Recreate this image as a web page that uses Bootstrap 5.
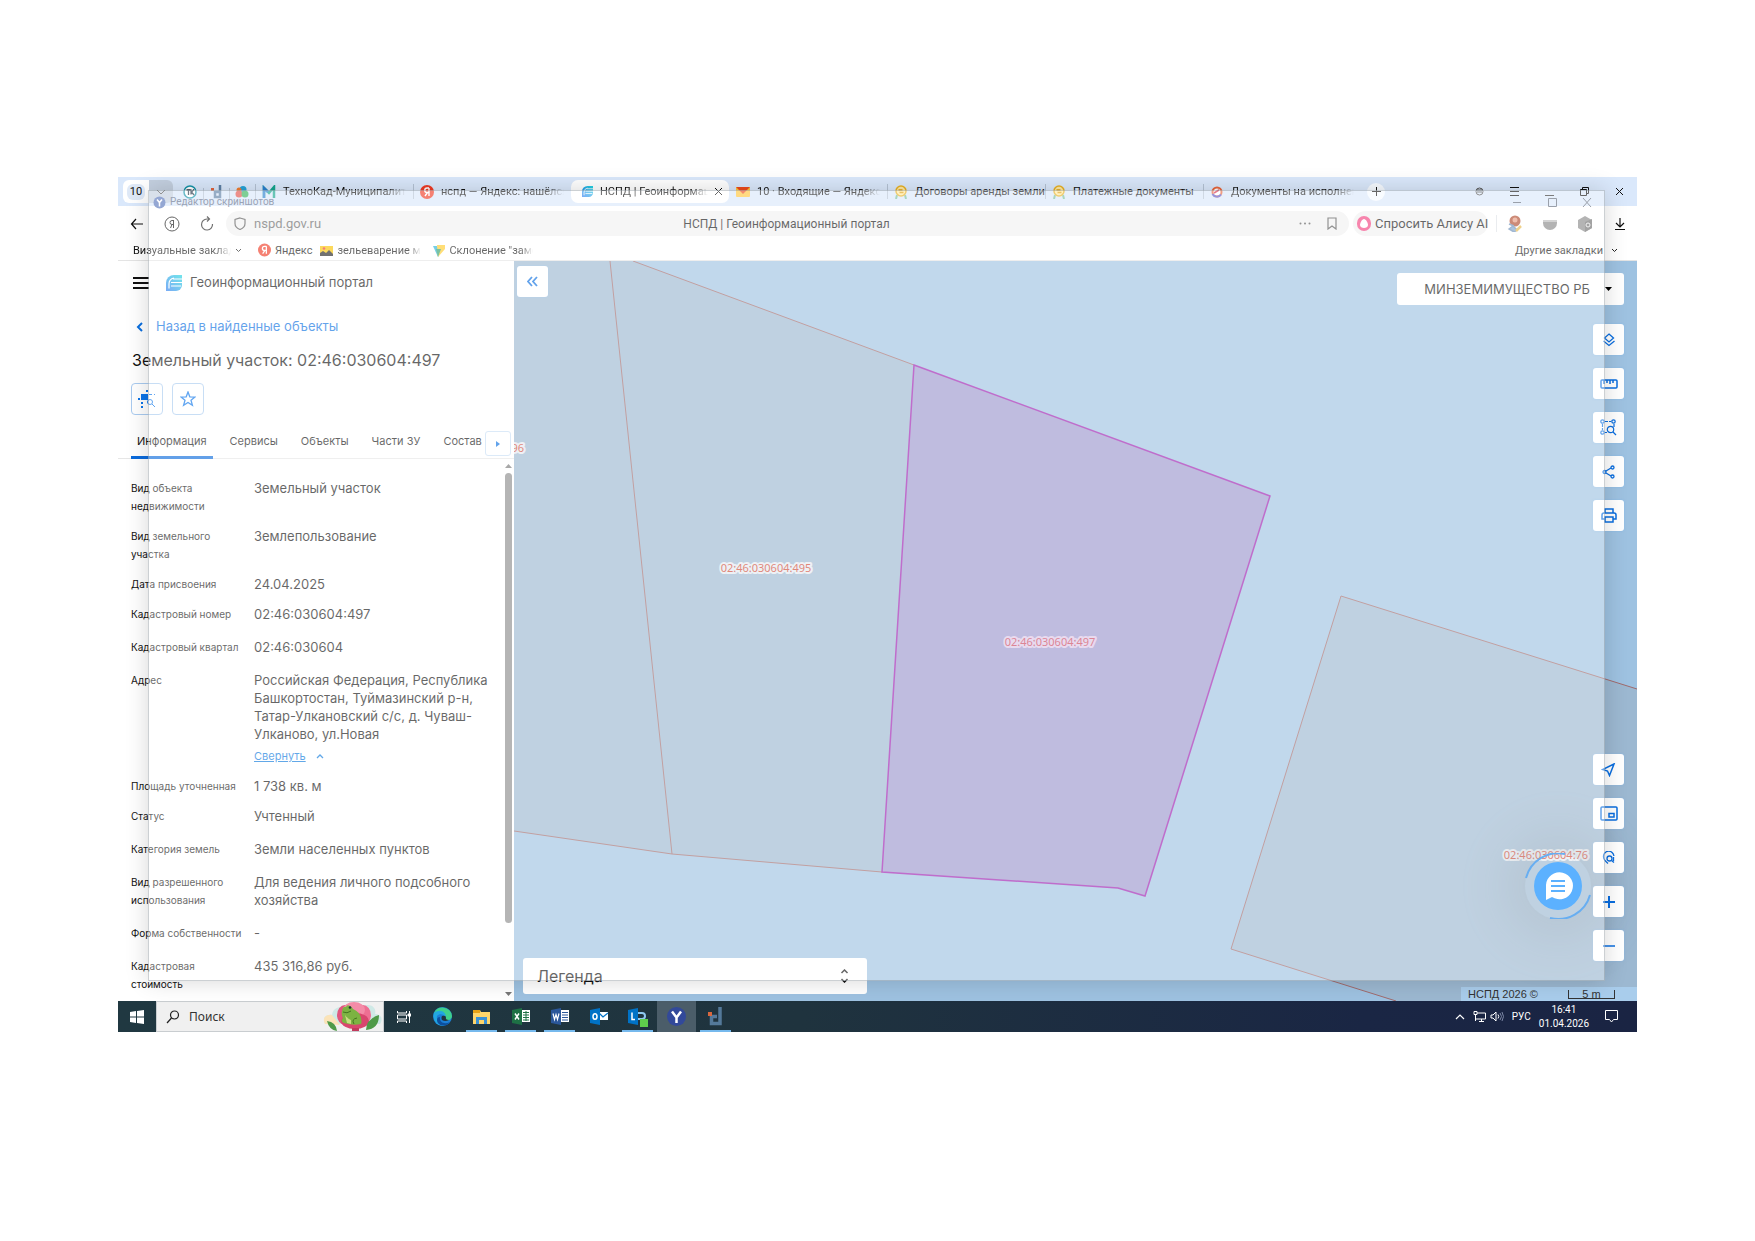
<!DOCTYPE html>
<html lang="ru">
<head>
<meta charset="utf-8">
<meta name="viewport" content="width=device-width, initial-scale=1">
<title>НСПД | Геоинформационный портал</title>
<link href="https://cdn.jsdelivr.net/npm/bootstrap@5.3.0/dist/css/bootstrap.min.css" rel="stylesheet">
<style>
body{background:#fff;font-family:Roboto,"Noto Sans",sans-serif;color:#111}
button{border:0;background:none;padding:0;color:inherit;font:inherit}
a{color:inherit;text-decoration:none}
svg{display:block;flex:none}
.stage{padding:177px 118px}
.desk{position:relative;background:#fff}
/* browser tabs */
.strip{height:29px;background:#dae8fb;padding-left:5px;font-size:11px;line-height:16px}
.count{width:26px;height:23px;background:#fff;border-radius:6px 0 0 6px}
.count span{background:#dfe9f7;border-radius:6px;padding:0 3px}
.drop{width:24px;height:23px;background:#c3cfdf;border-radius:0 6px 6px 0}
.pin{width:26px;height:16px}
.tabx{flex:0 0 158px;height:23px;padding:0 7px;gap:7px;min-width:0}
.sep{position:relative}
.sep::before{content:"";position:absolute;left:0;top:4px;height:15px;width:1px;background:#b4c2d4}
.cur{background:#fff;border-radius:7px}
.fadeout{overflow:hidden;white-space:nowrap;-webkit-mask-image:linear-gradient(90deg,#000 85%,transparent);mask-image:linear-gradient(90deg,#000 85%,transparent)}
.plus{width:18px;height:18px;border-radius:9px;background:#f6faff;margin-left:6px}
.wctl{width:35px}
/* address row */
.addr{height:35px;padding-left:9px;font-size:12px;background:#fff}
.nav-ic{width:20px;margin-right:15px}
.nav-ic.last{margin-right:9px}
.pill{background:#f1f1f1;border-radius:13px;height:25px}
.url{background:transparent;border:0;outline:0;color:#666;width:160px;font-size:13px;padding:0}
.ptitle{padding-right:92px}
.alice{width:135px;font-size:13px}
.ext{width:35px}
.marks{height:20px;padding:0 19px 0 15px;font-size:11px;line-height:16px;border-bottom:1px solid #e4e4e4}
.mk-a{width:98px}
.mk-b{width:84px}
/* side panel */
.work{min-height:740px}
.side{width:396px;flex:none;font-family:Inter,sans-serif;position:relative;background:#fff}
.side-head{height:43px;padding:0 15px;font-size:13px;gap:17px}
.back{height:45px;padding:0 16px;gap:10px;font-size:13px;color:#0a6fe0}
.side h1{font-size:16px;font-weight:400;line-height:22px;margin:0;padding:0 14px}
.sq{width:32px;height:32px;border:1px solid #a9cbf0;border-radius:4px;background:#fff;color:#0a74ea}
.acts{padding:12px 13px 0;gap:9px}
.ptabs{padding-left:13px;margin-top:14px;height:30px;border-bottom:1px solid #e6e6e6;font-size:11px}
.ptabs button{height:30px;padding:0 6px 2px;margin-right:11px;border-bottom:3px solid transparent;white-space:nowrap}
.ptabs button.on{border-color:#0b6bdc}
.more{position:absolute;right:3px;top:170px;width:26px;height:25px;border:1px solid #c8def5;border-radius:3px;background:#fff;color:#0a6fe0}
.facts{margin:0;padding:20px 20px 8px 13px}
.facts>div{display:flex;margin-bottom:15px}
.facts>div.tight{margin-bottom:12px}
.facts dt{width:123px;flex:none;font-weight:400;font-size:10px;line-height:18px;padding-right:12px}
.facts dd{margin:0;font-size:13px;line-height:18px}
.fold{color:#0a78dc;font-size:11px;line-height:18px;gap:10px}
.fold span{text-decoration:underline}
.sbar{position:absolute;right:2px;top:203px;bottom:5px;width:8px}
.thumb{width:7px;background:#8b8b8b;border-radius:4px;flex:0 0 450px;margin-top:5px}
/* map */
.map{position:relative;flex:1;min-width:0;overflow:hidden;background:#9ec2e1}
.map>svg{position:absolute;left:0;top:0;width:100%;height:100%}
.tool{width:31px;height:31px;background:#fff;border-radius:3px;color:#0a6ee0;box-shadow:0 0 2px rgba(120,180,240,.7)}
.tools{gap:13px}
.collapse-b{position:absolute;left:3px;top:5px}
.mright{position:absolute;right:13px;top:12px;bottom:40px}
.who{width:227px;height:32px;border:0;border-radius:3px;background:#fff;font:13px Inter,sans-serif;color:#111;appearance:none;padding:0 34px 0 0;text-align:right;text-align-last:right}
.whobox{position:relative;margin-bottom:19px}
.whobox svg{position:absolute;right:12px;top:14px}
.chat{position:absolute;right:46px;bottom:82px;width:66px;height:66px;border-radius:50%;box-shadow:0 0 50px 24px rgba(90,100,110,.2)}
.legend{position:absolute;left:9px;bottom:7px;width:344px;height:36px;background:#fff;border-radius:3px;font:16px Inter,sans-serif;padding:0 18px 0 14px}
.attr{position:absolute;right:0;bottom:0;height:14px;width:176px;background:#a9cdec;color:#333;font:11px "Liberation Sans",sans-serif;padding:0 22px 0 7px}
.scale5{width:47px;height:9px;line-height:9px;border:1px solid #333;border-top:0;text-align:center}
/* translucent window fading over the desktop */
.ghost{position:absolute;left:30px;top:13px;right:32px;bottom:51px;background:rgba(255,255,255,.36);border:1px solid rgba(110,120,130,.35);box-shadow:0 0 22px rgba(0,0,0,.16);pointer-events:none;font-size:10px;line-height:22px;color:#9aa3b5;z-index:5}
.ghost .wbtns{margin-right:12px}
/* taskbar */
.task{height:31px;background:linear-gradient(90deg,#203841,#1f333e 45%,#1a2644 82%,#1a2443);color:#fff;font-size:10px}
.startb{width:38px}
.find{width:228px;background:#f0f0f0;border:1px solid #c9cdd0;padding-left:9px;gap:9px}
.find input{border:0;background:none;outline:0;width:120px;font:12px "Noto Sans",sans-serif;color:#333;padding:0}
.find input::placeholder{color:#333;opacity:1}
.app{width:39px}
.run{background:linear-gradient(#76b9ed,#76b9ed) center bottom/31px 2px no-repeat}
.live{background:#4b5d69}
.tray{padding-right:19px}
.clock{line-height:14px}
</style>
<script src="https://cdn.jsdelivr.net/npm/bootstrap@5.3.0/dist/js/bootstrap.bundle.min.js"></script>
</head>
<body>
<svg width="0" height="0" class="position-absolute"><defs>
<linearGradient id="lg" x1="0" y1="1" x2="1" y2="0"><stop offset="0" stop-color="#2f7cf0"/><stop offset="1" stop-color="#22d6e0"/></linearGradient>
<symbol id="nspd" viewBox="0 0 16 16"><path fill="url(#lg)" d="M0 16V8a8 8 0 0 1 8-8h8v10a6 6 0 0 1-6 6z"/><path d="M7 4h9M5 7.500h11M5 11h10M3 13.500V9q0-5 5-6" stroke="#fff" stroke-width="1.200" fill="none"/></symbol>
<symbol id="coin" viewBox="0 0 14 14"><path d="M3 10l-1 4M11 10l1 4" stroke="#7bbf9a" stroke-width="2"/><circle cx="7" cy="6" r="5" fill="#ffe9a0" stroke="#e8b023" stroke-width="1.500"/><path d="M4.500 5h4M5.500 7.500h4" stroke="#e0a010" stroke-width="1.300"/></symbol>
<symbol id="ya" viewBox="0 0 14 14"><circle cx="7" cy="7" r="7" fill="#ef3a24"/><path d="M9 3v8M9 3H7a2 2 0 0 0 0 4.500h2M7.500 7.500L5 11" stroke="#fff" stroke-width="1.400" fill="none"/></symbol>
</defs></svg>
<main class="stage">
<div class="desk">
 <header>
  <div class="strip d-flex align-items-center">
   <button class="count d-flex align-items-center justify-content-center" aria-label="Вкладки"><span>10</span></button>
   <button class="drop d-flex align-items-center justify-content-center" aria-label="Список"><svg width="10" height="6" fill="none" stroke="#555"><path d="M1 1l4 4 4-4"/></svg></button>
   <div class="d-flex ms-1">
    <span class="pin d-flex justify-content-center"><svg width="14" height="16" viewBox="0 0 14 16"><circle cx="7" cy="8" r="6" fill="#fff" stroke="#1593a8" stroke-width="1.500"/><path d="M3.500 6h4M5.500 6v5M8 5.500v5M11 5.500L8.500 8l2.500 3" stroke="#234" stroke-width="1.300" fill="none"/></svg></span>
    <span class="pin sep d-flex justify-content-center"><svg width="12" height="16" viewBox="0 0 12 16"><path d="M10 1v12H5V8h4" fill="none" stroke="#5d7fa5" stroke-width="2.500"/><rect x="1" y="4" width="3" height="3" fill="#e0623c"/></svg></span>
    <span class="pin sep d-flex justify-content-center"><svg width="14" height="16" viewBox="0 0 14 16"><circle cx="8" cy="5.500" r="3.500" fill="#27a3d8"/><circle cx="4" cy="6" r="2.500" fill="#f07c30"/><circle cx="4" cy="10" r="3.500" fill="#e2504a"/><circle cx="10" cy="10" r="3.500" fill="#36b35a"/></svg></span>
   </div>
   <div class="tabx sep d-flex align-items-center"><svg width="14" height="14" viewBox="0 0 14 14"><path d="M2 13V3l5 5 5-6v11" fill="none" stroke="#14a58e" stroke-width="2.500"/><path d="M2 13V3l4 4" fill="none" stroke="#2b7fd0" stroke-width="2.500"/></svg><span class="fadeout">ТехноКад-Муниципалитет</span></div>
   <div class="tabx sep d-flex align-items-center"><svg width="14" height="14"><use href="#ya"/></svg><span class="fadeout">нспд — Яндекс: нашёлся 1</span></div>
   <div class="tabx cur d-flex align-items-center"><svg width="11" height="11" class="ms-1"><use href="#nspd"/></svg><span class="fadeout">НСПД | Геоинформацион</span><button class="lh-1" aria-label="Закрыть вкладку"><svg width="7" height="7" stroke="#111"><path d="M0 0l7 7M7 0L0 7"/></svg></button></div>
   <div class="tabx d-flex align-items-center"><svg width="14" height="10" viewBox="0 0 14 10"><rect width="14" height="10" rx="1" fill="#ffc53a"/><path d="M0 0h14L7 7z" fill="#ec4a1c"/></svg><span class="fadeout">10 · Входящие — Яндекс П</span></div>
   <div class="tabx sep d-flex align-items-center"><svg width="14" height="14"><use href="#coin"/></svg><span class="text-nowrap">Договоры аренды земли</span></div>
   <div class="tabx sep d-flex align-items-center"><svg width="14" height="14"><use href="#coin"/></svg><span class="text-nowrap">Платежные документы</span></div>
   <div class="tabx sep d-flex align-items-center"><svg width="14" height="14" viewBox="0 0 14 14"><circle cx="7" cy="7" r="4.500" fill="#fff" stroke="#e8663c" stroke-width="2"/><path d="M2.500 9A5 5 0 0 0 11 9.500" stroke="#5b58c9" stroke-width="2" fill="none"/><path d="M4 8l5-3" stroke="#d9304a" stroke-width="1.500"/></svg><span class="fadeout">Документы на исполнени</span></div>
   <button class="plus d-flex align-items-center justify-content-center" aria-label="Новая вкладка"><svg width="9" height="9" stroke="#111"><path d="M4.500 0v9M0 4.500h9"/></svg></button>
   <div class="d-flex ms-auto">
    <button class="wctl d-flex justify-content-center" aria-label="Профиль"><svg width="9" height="9" fill="none" stroke="#555"><circle cx="4.500" cy="4.500" r="3.500"/><path d="M2 3h5M2 5h5" /></svg></button>
    <button class="wctl d-flex justify-content-center" aria-label="Меню"><svg width="9" height="9" stroke="#111"><path d="M0 .5h9M0 4.500h9M0 8.500h9"/></svg></button>
    <button class="wctl d-flex justify-content-center" aria-label="Свернуть"><svg width="9" height="9" stroke="#333"><path d="M0 8.500h9"/></svg></button>
    <button class="wctl d-flex justify-content-center" aria-label="Окно"><svg width="9" height="9" fill="none" stroke="#111"><path d="M.5 2.500h6v6h-6zM2.500 2V.5h6v6H7"/></svg></button>
    <button class="wctl d-flex justify-content-center" aria-label="Закрыть"><svg width="9" height="9" stroke="#111"><path d="M1 1l7 7M8 1L1 8"/></svg></button>
   </div>
  </div>
  <div class="addr d-flex align-items-center">
   <button class="nav-ic" aria-label="Назад"><svg width="14" height="12" class="mx-auto" fill="none" stroke="#111" stroke-width="1.200"><path d="M6 1L1.500 6 6 11M2 6h11"/></svg></button>
   <button class="nav-ic" aria-label="Яндекс"><svg width="16" height="16" class="mx-auto" fill="none" stroke="#111"><circle cx="8" cy="8" r="7"/><path d="M9.500 4v8M9.500 4.500H8a2 2 0 0 0 0 4h1.500M8 8.500L6.500 12"/></svg></button>
   <button class="nav-ic last" aria-label="Обновить"><svg width="14" height="15" class="mx-auto" fill="none" stroke="#222" stroke-width="1.200"><path d="M12.500 8A5.500 5.500 0 1 1 7 3h2M7 .5L9.500 3 7 5.500"/></svg></button>
   <div class="pill flex-fill d-flex align-items-center px-2 me-1">
    <svg width="12" height="13" fill="none" stroke="#555" stroke-width="1.200"><path d="M6 1l5 1.500v4C11 9.500 8.500 11.500 6 12.500 3.500 11.500 1 9.500 1 6.500v-4z"/></svg>
    <input class="url ms-2" value="nspd.gov.ru" aria-label="Адрес">
    <span class="flex-fill text-center ptitle">НСПД | Геоинформационный портал</span>
    <svg width="12" height="3" fill="#555" class="ms-5 me-3"><circle cx="1.500" cy="1.500" r="1"/><circle cx="6" cy="1.500" r="1"/><circle cx="10.500" cy="1.500" r="1"/></svg>
    <svg width="10" height="13" class="me-1" fill="none" stroke="#555" stroke-width="1.200"><path d="M1 1h8v11L5 9l-4 3z"/></svg>
   </div>
   <button class="pill alice d-flex align-items-center ps-1 me-2 gap-1 text-nowrap"><svg width="14" height="15"><rect width="14" height="15" rx="7" fill="#f2407f"/><path d="M7 3c2 0 4 4 4 6s-2 3-4 3-4-1-4-3 2-6 4-6z" fill="#fff"/></svg>Спросить Алису AI</button>
   <div class="d-flex border-start">
    <button class="ext" aria-label="Профиль"><svg width="16" height="17" class="mx-auto"><circle cx="8" cy="6" r="5.500" fill="#b04a2c"/><circle cx="8" cy="5" r="2.500" fill="#e79a80"/><path d="M2 9l5 2M2 14l4-3 4 4-3 2z" stroke="#6c8fb8" fill="#7da3cc" stroke-width="1.500"/><path d="M9 16l5-5" stroke="#e6b84a" stroke-width="2.500"/></svg></button>
    <button class="ext" aria-label="Расширение"><svg width="14" height="14" class="mx-auto"><path d="M0 3h14v3A7 7 0 0 1 0 6z" fill="#888"/><path d="M0 4h14" stroke="#bbb" stroke-width="2"/></svg></button>
    <button class="ext" aria-label="Расширения"><svg width="14" height="16" class="mx-auto"><path d="M7 0l7 4v8l-7 4-7-4V4z" fill="#8a8a8a"/><path d="M7 6l7-3v9l-7 4z" fill="#707070"/><circle cx="10" cy="9" r="2" fill="none" stroke="#eee"/></svg></button>
    <button class="ext" aria-label="Загрузки"><svg width="10" height="12" class="mx-auto" fill="none" stroke="#111" stroke-width="1.200"><path d="M5 0v8M1 5l4 4 4-4M0 11.500h10"/></svg></button>
   </div>
  </div>
  <nav class="marks d-flex align-items-center">
   <a href="#" class="fadeout mk-a">Визуальные закладки</a>
   <svg width="7" height="5" class="ms-1 me-3" fill="none" stroke="#222"><path d="M1 1l2.500 2.500L6 1"/></svg>
   <a href="#" class="d-flex gap-1 me-2"><svg width="13" height="14"><use href="#ya"/></svg>Яндекс</a>
   <a href="#" class="d-flex align-items-center gap-1 me-2"><svg width="13" height="10"><rect width="13" height="10" fill="#fbc400"/><path d="M0 10V7l3-2 3 2 3-3 4 4v2z" fill="#222"/><circle cx="4" cy="2.500" r="1.300" fill="#e33"/></svg><span class="fadeout mk-b">зельеварение май</span></a>
   <a href="#" class="d-flex align-items-center gap-1 ms-1"><svg width="12" height="12"><path d="M0 1h4l3 6-2 5z" fill="#28b4d8"/><path d="M4 0h8v4L5 12z" fill="#ffcc2b"/><path d="M3 4h5l-3 8z" fill="#2f9e6e"/></svg><span class="fadeout mk-b">Склонение "замок</span></a>
   <a href="#" class="ms-auto d-flex align-items-center gap-2">Другие закладки <svg width="7" height="5" fill="none" stroke="#222"><path d="M1 1l2.500 2.500L6 1"/></svg></a>
  </nav>
 </header>

 <div class="work d-flex">
  <section class="side">
   <div class="side-head d-flex align-items-center">
    <button aria-label="Меню"><svg width="16" height="12" stroke="#111" stroke-width="2"><path d="M0 1h16M0 6h16M0 11h16"/></svg></button>
    <span class="d-flex align-items-center gap-2"><svg width="16" height="16"><use href="#nspd"/></svg>Геоинформационный портал</span>
   </div>
   <a href="#" class="back d-flex align-items-center"><svg width="12" height="10" fill="none" stroke="currentColor" stroke-width="2"><path d="M8 1L4 5l4 4"/></svg>Назад в найденные объекты</a>
   <h1>Земельный участок: 02:46:030604:497</h1>
   <div class="acts d-flex">
    <button class="sq d-flex align-items-center justify-content-center" aria-label="Показать на карте"><svg width="18" height="18" fill="currentColor"><rect x="3" y="4" width="7" height="6"/><path d="M8 0h2v2H8zM0 8h2v2H0zM3 12h2v2H3zM3 16h2v2H3zM11 4h3v1h-3zM16 4h1v1h-1z"/><circle cx="12" cy="12" r="2.500" fill="none" stroke="currentColor"/><path d="M14 14l3 3" stroke="currentColor"/></svg></button>
    <button class="sq d-flex align-items-center justify-content-center" aria-label="В избранное"><svg width="16" height="16" fill="none" stroke="currentColor" stroke-width="1.300"><path d="M8 1l1.800 4.800 5.200.2-4 3.300 1.400 5L8 11.500 3.600 14.300 5 9.300 1 6l5.200-.2z"/></svg></button>
   </div>
   <div class="ptabs d-flex">
    <button class="on">Информация</button><button>Сервисы</button><button>Объекты</button><button>Части ЗУ</button><button>Состав</button>
   </div>
   <button class="more d-flex align-items-center justify-content-center" aria-label="Ещё вкладки"><svg width="4" height="6" fill="currentColor"><path d="M0 0l4 3-4 3z"/></svg></button>
   <dl class="facts">
    <div class="tight"><dt>Вид объекта недвижимости</dt><dd>Земельный участок</dd></div>
    <div class="tight"><dt>Вид земельного участка</dt><dd>Землепользование</dd></div>
    <div class="tight"><dt>Дата присвоения</dt><dd>24.04.2025</dd></div>
    <div><dt>Кадастровый номер</dt><dd>02:46:030604:497</dd></div>
    <div><dt>Кадастровый квартал</dt><dd>02:46:030604</dd></div>
    <div class="tight"><dt>Адрес</dt><dd>Российская Федерация, Республика Башкортостан, Туймазинский р-н, Татар-Улкановский с/с, д. Чуваш-Улканово, ул.Новая<button class="fold d-flex align-items-center pt-1"><span>Свернуть</span><svg width="8" height="5" fill="none" stroke="currentColor" stroke-width="1.300"><path d="M1 4l3-3 3 3"/></svg></button></dd></div>
    <div class="tight"><dt>Площадь уточненная</dt><dd>1 738 кв. м</dd></div>
    <div><dt>Статус</dt><dd>Учтенный</dd></div>
    <div><dt>Категория земель</dt><dd>Земли населенных пунктов</dd></div>
    <div><dt>Вид разрешенного использования</dt><dd>Для ведения личного подсобного хозяйства</dd></div>
    <div><dt>Форма собственности</dt><dd>-</dd></div>
    <div class="mb-0"><dt>Кадастровая стоимость</dt><dd>435 316,86 руб.</dd></div>
   </dl>
   <div class="sbar d-flex flex-column align-items-center"><svg width="7" height="4" fill="#777"><path d="M0 4l3.500-4L7 4z"/></svg><div class="thumb"></div><svg width="7" height="4" fill="#777" class="mt-auto"><path d="M0 0h7L3.500 4z"/></svg></div>
  </section>

  <section class="map">
   <svg viewBox="514 261 1123 740" preserveAspectRatio="xMinYMin slice" font-family="Noto Sans, sans-serif" font-size="11">
    <path d="M514 261H633L914 365 882 872 672 854 514 831z" fill="#9cb8d1"/>
    <path d="M1341 596L1637 689V1001H1396L1231 949z" fill="#9cb8d1"/>
    <g fill="none" stroke="#a06a6c" stroke-width="1"><path d="M633 261L914 365M610 261L672 854M514 831L672 854 882 872"/><path d="M1637 689L1341 596 1231 949 1396 1001"/></g>
    <path d="M914 365L1270 496 1145 896 1118 888 882 872z" fill="#9c96cd" stroke="#9c1caf" stroke-width="1.500"/>
    <g fill="#cf4530" stroke="#e4eaf0" stroke-width="4" stroke-linejoin="round" paint-order="stroke" text-anchor="middle">
     <text x="766" y="572">02:46:030604:495</text><text x="1050" y="646" fill="#c8405a" stroke="#dcc6e6">02:46:030604:497</text><text x="1546" y="859">02:46:030604:76</text><text x="524" y="452" text-anchor="end">02:46:030604:496</text></g>
   </svg>
   <button class="tool collapse-b d-flex align-items-center justify-content-center" aria-label="Скрыть панель"><svg width="11" height="11" fill="none" stroke="currentColor" stroke-width="1.800"><path d="M5 1L1 5.500 5 10M10 1L6 5.500 10 10"/></svg></button>
   <div class="chat"><svg width="66" height="66" viewBox="0 0 66 66"><circle cx="33" cy="33" r="24" fill="#0086ff"/><path d="M1 25A33 33 0 0 1 40 1M65 42A33 33 0 0 1 25 65" fill="none" stroke="#1280ea" stroke-width="2"/><path d="M21 47V32a13.500 13.500 0 1 1 6 12z" fill="#fff"/><path d="M26 28h14M26 33h14M26 38h14" stroke="#0086ff" stroke-width="2"/></svg></div>
   <div class="mright d-flex flex-column align-items-end">
    <div class="whobox"><select class="who" aria-label="Организация"><option>МИНЗЕМИМУЩЕСТВО РБ</option></select><svg width="7" height="4"><path d="M0 0h7L3.500 4z"/></svg></div>
    <div class="tools d-flex flex-column">
     <button class="tool d-flex align-items-center justify-content-center" aria-label="Слои"><svg width="14" height="14" fill="none" stroke="currentColor" stroke-width="1.300"><path d="M7 1l4.500 4L7 9 2.500 5zM1.500 8L7 12.500 12.500 8"/></svg></button>
     <button class="tool d-flex align-items-center justify-content-center" aria-label="Линейка"><svg width="18" height="10" fill="none" stroke="currentColor" stroke-width="1.500"><rect x="1" y="1" width="16" height="8" rx="1"/><path d="M4 1v4M7 1v3M10 1v4M13 1v3"/></svg></button>
     <button class="tool d-flex align-items-center justify-content-center" aria-label="Поиск в области"><svg width="17" height="17" fill="none" stroke="currentColor" stroke-width="1.200"><circle cx="2.500" cy="2.500" r="1.700"/><circle cx="13.500" cy="2.500" r="1.700"/><circle cx="2.500" cy="13.500" r="1.700"/><path d="M5 2.500h6M2.500 5v6M5 13.500h2M14 5v3" stroke-dasharray="3 1"/><circle cx="10.500" cy="10.500" r="3.200"/><path d="M13 13l3 3"/></svg></button>
     <button class="tool d-flex align-items-center justify-content-center" aria-label="Поделиться"><svg width="14" height="14" fill="none" stroke="currentColor" stroke-width="1.300"><circle cx="2.500" cy="7" r="1.500"/><circle cx="10.500" cy="2.500" r="1.500"/><circle cx="10.500" cy="11.500" r="1.500"/><path d="M4 6l5-3M4 8l5 3"/></svg></button>
     <button class="tool d-flex align-items-center justify-content-center" aria-label="Печать"><svg width="16" height="15" fill="none" stroke="currentColor" stroke-width="1.500"><path d="M4 5V1h8v4M4 11H1V7q0-2 2-2h10q2 0 2 2v4h-3"/><rect x="4" y="9" width="8" height="5"/></svg></button>
    </div>
    <div class="tools d-flex flex-column mt-auto">
     <button class="tool d-flex align-items-center justify-content-center" aria-label="Моё местоположение"><svg width="15" height="14" fill="none" stroke="currentColor" stroke-width="1.500"><path d="M13 1L1.500 6.500 6.500 8 8.500 12.500z"/></svg></button>
     <button class="tool d-flex align-items-center justify-content-center" aria-label="Обзорная карта"><svg width="18" height="15" fill="none" stroke="currentColor" stroke-width="1.500"><rect x="1" y="1" width="16" height="13" rx="1"/><rect x="9" y="7.500" width="5" height="3.500"/></svg></button>
     <button class="tool d-flex align-items-center justify-content-center" aria-label="Найти место"><svg width="14" height="14" fill="none" stroke="currentColor" stroke-width="1.300"><path d="M6 12.500C3 10 1.500 8 1.500 5.800a5.200 5.200 0 0 1 10.400-.8"/><circle cx="7.500" cy="7.500" r="2.500"/><path d="M9.500 9.500l2.500 2M11.500 6v4"/></svg></button>
     <button class="tool d-flex align-items-center justify-content-center" aria-label="Приблизить"><svg width="12" height="12" stroke="currentColor" stroke-width="2"><path d="M6 0v12M0 6h12"/></svg></button>
     <button class="tool d-flex align-items-center justify-content-center" aria-label="Отдалить"><svg width="12" height="2" stroke="currentColor" stroke-width="1.500"><path d="M0 1h12"/></svg></button>
    </div>
   </div>
   <button class="legend d-flex align-items-center justify-content-between">Легенда<svg width="9" height="14" fill="none" stroke="#111" stroke-width="1.500"><path d="M1.500 4l3-3 3 3M1.500 10l3 3 3-3"/></svg></button>
   <div class="attr d-flex align-items-center justify-content-between"><span>НСПД 2026 ©</span><span class="scale5">5 m</span></div>
  </section>
 </div>

 <div class="ghost">
  <div class="d-flex align-items-center">
   <svg width="13" height="22" viewBox="0 0 13 22" class="mx-1"><circle cx="6.500" cy="11.500" r="6" fill="#94a7d3"/><path d="M4 8.500l2.500 3 2.500-3M6.500 11.500v4" stroke="#fff" stroke-width="1.500" fill="none"/></svg><span>Редактор скриншотов</span>
   <svg width="79" height="9" class="ms-auto wbtns" fill="none" stroke="#9aa0aa"><path d="M0 4.500h8M35.500.5h8v8h-8zM70 0l8 9M78 0l-8 9"/></svg>
  </div>
 </div>

 <footer class="task d-flex">
  <button class="startb d-flex align-items-center justify-content-center" aria-label="Пуск"><svg width="14" height="14" fill="#fff"><path d="M0 2l6-1v5.500H0zM7 1l7-1v6.500H7zM0 7.500h6V13l-6-1zM7 7.500h7V14l-7-1z"/></svg></button>
  <label class="find d-flex align-items-center"><svg width="14" height="14" fill="none" stroke="#222" stroke-width="1.200"><circle cx="8.500" cy="5" r="4"/><path d="M5.500 8L1 13"/></svg><input placeholder="Поиск" aria-label="Поиск">
   <svg width="60" height="29" viewBox="0 0 60 29" class="ms-auto"><path d="M2 22C-2 14 6 12 9 13 10 5 18 4 22 5L40 4c8-3 14 2 12 8 7 0 8 6 5 10z" fill="#cfe9e6"/><path d="M2 22C-2 14 6 12 9 13l8 10z" fill="#fbe3b8"/><ellipse cx="22" cy="13" rx="8" ry="10" fill="#e0567d"/><ellipse cx="40" cy="13" rx="8" ry="10" fill="#ee6f93"/><ellipse cx="31" cy="8" rx="11" ry="8" fill="#f48ca8"/><ellipse cx="32" cy="19" rx="14" ry="8" fill="#d9466e"/><path d="M29 26h7v3h-7z" fill="#c23a5c"/><path d="M19 9q1-5 4-4 1-3 4-1 2 1 3 3 7 3 8 9 1 4 0 6-8 2-17-1-4-2-1-5-2-3-1-7z" fill="#7cb342"/><path d="M22 13q3 4 6 5v4l-4-1z" fill="#c9dc82"/><path d="M20 10q4 2 8-1M31 22q-3-5 3-6" stroke="#44751f" fill="none"/><circle cx="27" cy="5.500" r="1.300" fill="#233"/><path d="M14 29Q6 28 4 19q9 1 10 10zM43 28q0-11 13-15 0 14-13 15z" fill="#4f9a48"/></svg></label>
  <div class="d-flex">
   <button class="app d-flex align-items-center justify-content-center" aria-label="Представление задач"><svg width="14" height="12" fill="none" stroke="#fff"><path d="M.5 0v2h9V0M.5 12v-2h9v2M.5 4h9v4h-9zM12.500 0v12"/><path d="M11 3h3v2h-3z" fill="#fff"/></svg></button>
   <button class="app d-flex align-items-center justify-content-center" aria-label="Edge"><svg width="19" height="19" viewBox="0 0 19 19"><circle cx="9.500" cy="9.500" r="9.500" fill="#1b7fd6"/><path d="M1 6A9.500 9.500 0 0 1 19 9c0 3-3 5-6 4 1-5-6-9-12-7z" fill="#3fd08c"/><path d="M1 6c6-5 12-1 12 4-2-3-7-4-9-1-1 5 3 9 8 9.500C5 20 0 14 .5 8z" fill="#22a7e0"/><path d="M7 10c-1 5 4 8 10 5-4 6-13 4-13-2 0-2 1-3 3-3z" fill="#0d4f9e"/><path d="M9 9q3-1 4 1-1 3 3 3-4 2-7 0-1-2 0-4z" fill="#21343e"/></svg></button>
   <button class="app run d-flex align-items-center justify-content-center" aria-label="Проводник"><svg width="17" height="15"><path d="M0 1h7l1 2h9v12H0z" fill="#ffd66b"/><path d="M0 1h7v3H0z" fill="#e8a317"/><path d="M3 15V8h11v7h-3v-4H6v4z" fill="#3b92d6"/></svg></button>
   <button class="app run d-flex align-items-center justify-content-center" aria-label="Excel"><svg width="18" height="17"><path d="M8 2h10v12H8z" fill="#fff"/><path d="M11 4.500h6M11 7h6M11 9.500h6M11 12h6M14 3v10" stroke="#1e7145"/><path d="M0 2l10-2v17L0 15z" fill="#1e7145"/><path d="M3 5.500l4 6M7 5.500l-4 6" stroke="#fff" stroke-width="1.500"/></svg></button>
   <button class="app run d-flex align-items-center justify-content-center" aria-label="Word"><svg width="18" height="17"><path d="M8 2h10v12H8z" fill="#fff"/><path d="M11 4.500h6M11 7h6M11 9.500h6M11 12h6" stroke="#2b579a"/><path d="M0 2l10-2v17L0 15z" fill="#2b579a"/><path d="M2 5.500l1.500 6L5 6.500l1.500 5 1.500-6" fill="none" stroke="#fff" stroke-width="1.200"/></svg></button>
   <button class="app d-flex align-items-center justify-content-center" aria-label="Outlook"><svg width="18" height="17"><path d="M9 4h9v8H9z" fill="#fff"/><path d="M9 5l4 4 5-4" stroke="#0072c6" fill="none" stroke-width="1.300"/><path d="M0 2l10-2v17L0 15z" fill="#0072c6"/><ellipse cx="5" cy="8.500" rx="2" ry="2.800" fill="none" stroke="#fff" stroke-width="1.500"/></svg></button>
   <button class="app run d-flex align-items-center justify-content-center" aria-label="Lync"><svg width="20" height="20"><path d="M0 3l10-2v17L0 16z" fill="#0072c6"/><path d="M4 5.500v7h3" stroke="#fff" stroke-width="1.500" fill="none"/><path d="M10 6h4a3 3 0 0 1 0 6h-4" stroke="#8fc8f0" stroke-width="2" fill="none"/><path d="M12 12h8v8h-8z" fill="#5fcf4c"/></svg></button>
   <button class="app live d-flex align-items-center justify-content-center" aria-label="Яндекс Браузер"><svg width="19" height="19"><circle cx="9.500" cy="9.500" r="9.500" fill="#32499a"/><path d="M5 4.500l4.500 6 4.500-6M9.500 10v6" stroke="#fff" stroke-width="2.500" fill="none"/></svg></button>
   <button class="app run d-flex align-items-center justify-content-center" aria-label="Приложение"><svg width="15" height="19"><path d="M12 0v16.500H3.500v-7H9" fill="none" stroke="#54799a" stroke-width="3.500"/><rect x="0" y="5" width="4" height="4" fill="#d9683f"/></svg></button>
  </div>
  <div class="tray d-flex align-items-center ms-auto">
   <svg width="10" height="6" class="me-2" fill="none" stroke="#fff" stroke-width="1.200"><path d="M1 5l4-4 4 4"/></svg>
   <svg width="13" height="11" class="me-1" fill="none" stroke="#fff"><path d="M4 2h8.500v6H3M1 .5h3v3H1zM2.500 4v6M6 10.500h5M8.500 8v2"/></svg>
   <svg width="14" height="11" class="me-2" fill="none" stroke="#fff"><path d="M1 4h2l3-3v9L3 7H1zM8 3.500q1.500 2 0 4"/><path d="M10 2q3 3.500 0 7M12 1q3 4.500 0 9" stroke="#7d88a5"/></svg>
   <span class="me-2">РУС</span>
   <span class="text-center me-3 clock">16:41<br>01.04.2026</span>
   <svg width="13" height="13" fill="none" stroke="#fff"><path d="M.5.5h12v9h-4l-2 2.500-2-2.500h-4z"/></svg>
  </div>
 </footer>
</div>
</main>
</body>
</html>
